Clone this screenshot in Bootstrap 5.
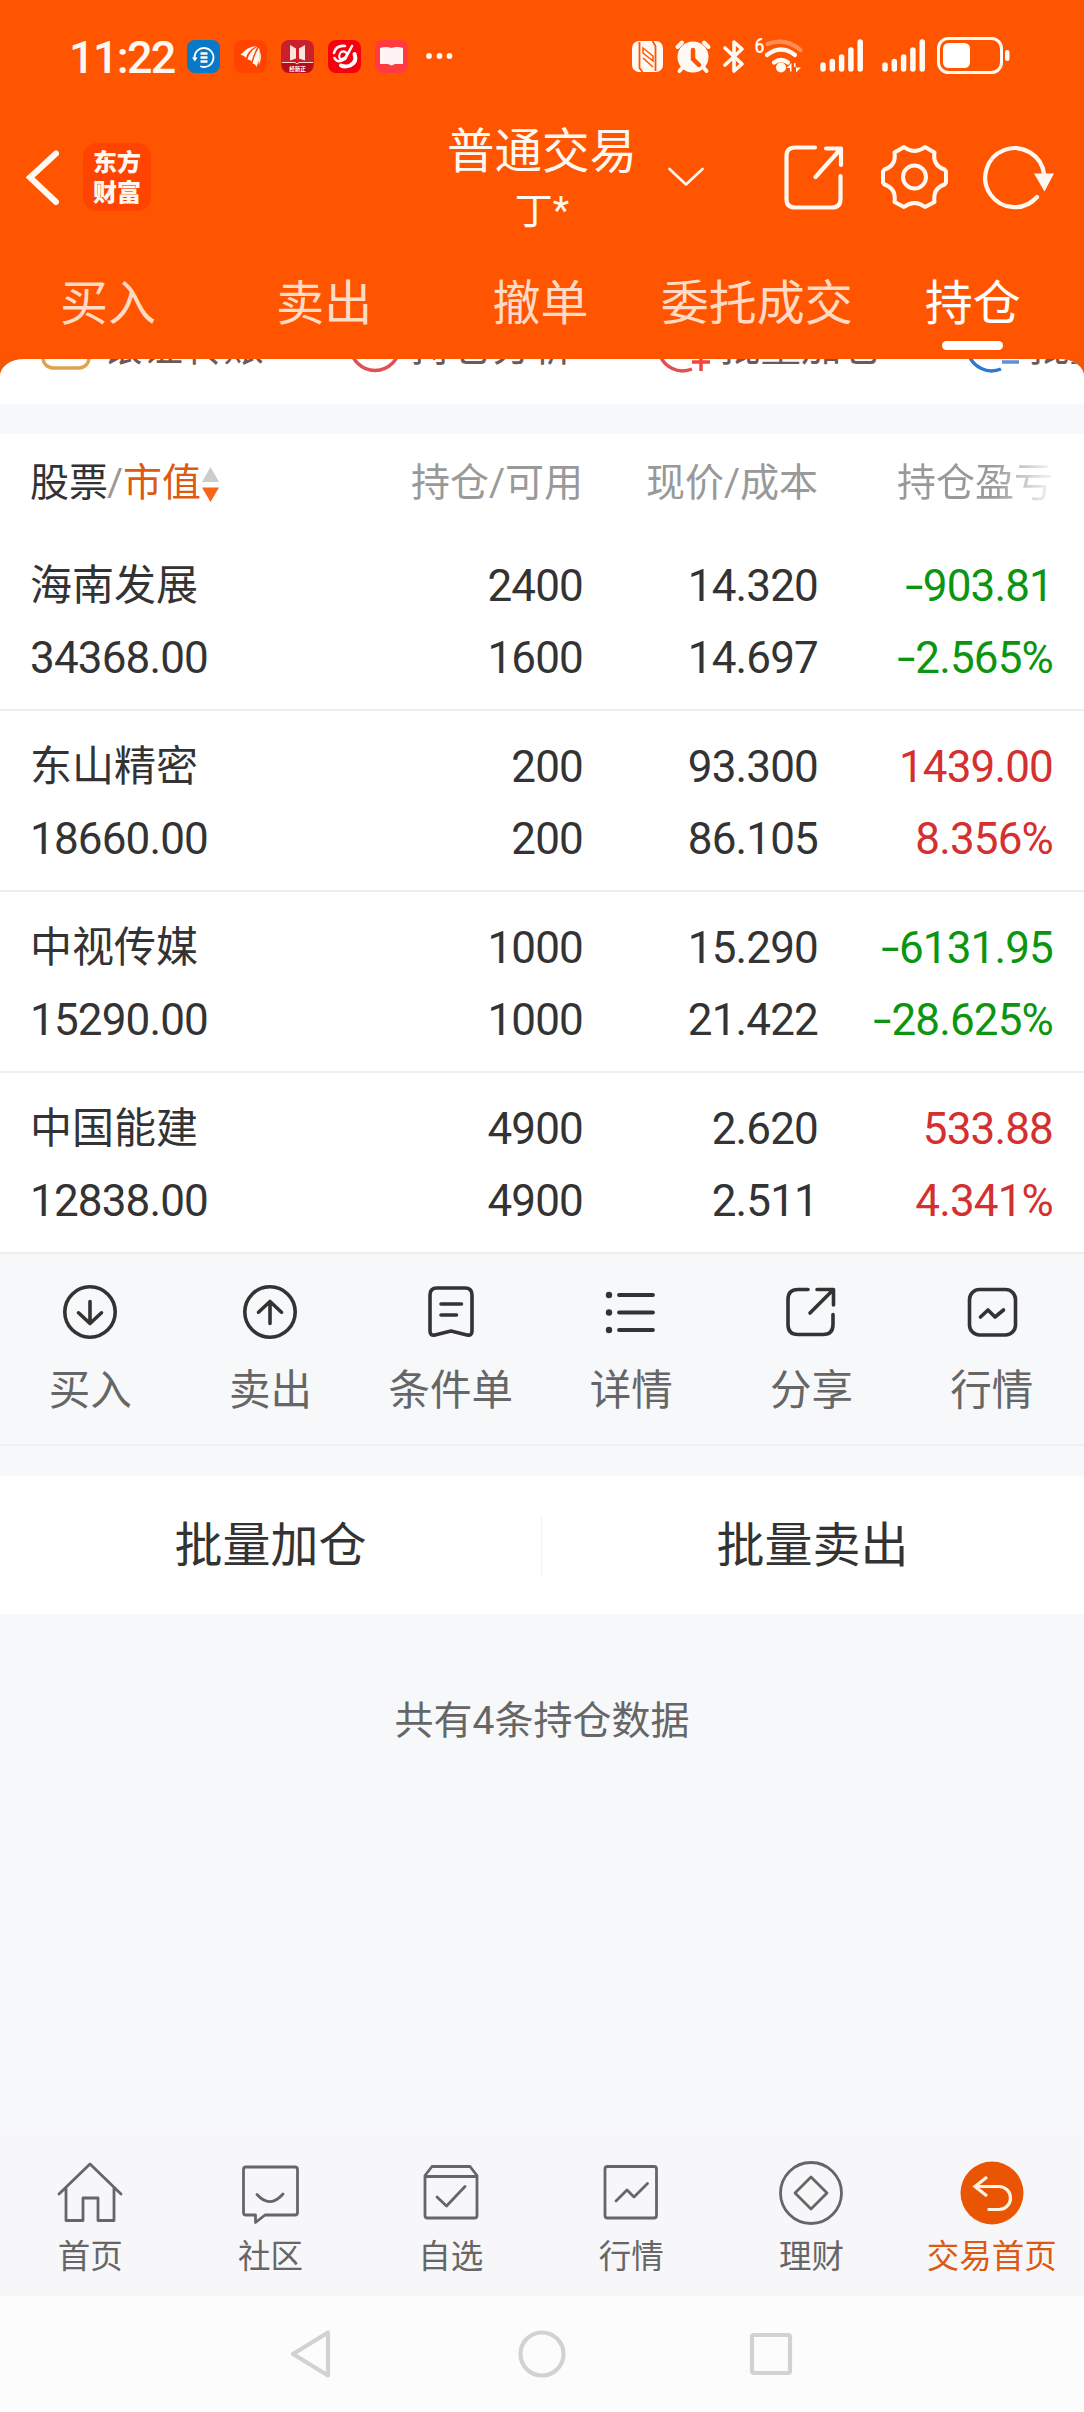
<!DOCTYPE html>
<html lang="zh-CN">
<head>
<meta charset="utf-8">
<meta name="viewport" content="width=device-width, initial-scale=1">
<title>持仓</title>
<link href="https://cdn.jsdelivr.net/npm/bootstrap@5.3.0/dist/css/bootstrap.min.css" rel="stylesheet">
<script src="https://cdn.jsdelivr.net/npm/bootstrap@5.3.0/dist/js/bootstrap.bundle.min.js"></script>
<style>
body{font-family:Roboto,"Noto Sans CJK SC",sans-serif;background:#f7f8fa;color:#333;width:1084px;height:2412px;overflow:hidden}
svg{display:block;flex:none}
.ln{fill:none;stroke:currentColor;stroke-linecap:round;stroke-linejoin:round}
.top-area{background:#f50;height:359px;color:#fff8f0}
.status-bar{height:112px;padding:0 74px 0 69px}
.clock-text{font-size:45px;font-weight:500;line-height:48px;letter-spacing:-1.7px;width:118px;margin-top:34px}
.title-bar{height:128px}
.bar-left{width:442px;padding:31px 0 0 26px}
.app-logo{width:68px;height:68px;margin:0 0 0 24px;border-radius:14px;background:#ff4300;font-family:"Noto Sans CJK SC",sans-serif;font-weight:900;font-size:24px;line-height:30px;padding-top:3px;text-align:center;color:#fff8f0}
.acct{width:200px;text-align:center;padding-top:8px}
.acct-name{font-size:47.5px;line-height:64px}
.acct-user{font-size:38px;line-height:50px;margin-top:2px}
.tabs-row{height:119px;padding-right:3px}
.tabs-row .tab-link{width:20%;text-align:center;font-size:48px;line-height:64px;padding-top:32px;color:#ffdac5;white-space:nowrap}
.tabs-row .tab-link.active{color:#fff}
.tab-link.active::after{content:"";display:block;width:61px;height:9px;border-radius:5px;background:#fff;margin:5px auto 0}
.notch{background:#ed5a0c;height:45px}
.notch-in{background:#fff;height:45px;border-radius:24px 24px 0 0/17px 17px 0 0;overflow:hidden}
.quick-row{margin-top:-42px;width:1236px;height:60px}
.quick-item{width:309px;font-size:40.5px;line-height:60px;color:#6b5a55;padding-left:38px}
.quick-item svg{margin-right:8px}
.gap-band{height:30px}
.grid4{display:grid;grid-template-columns:313px 240px 235px 235px;padding:0 31px 0 30px}
.grid4>:nth-child(n+2){text-align:right}
.head-row{height:96px;font-size:39px;line-height:99px;color:#999;background:#fff}
.title-key{color:#333}
.sl{margin:0 0 0 -1px}
.sort-mark{margin:2px 0 0 1px}
.fade-text{background:linear-gradient(90deg,#999 0 97px,#eee 150px);-webkit-background-clip:text;background-clip:text;color:transparent;display:inline-block}
.hold-row{height:181px;background:#fff;border-bottom:2px solid #eee;font-size:44px;line-height:72px;padding-top:20px;letter-spacing:-.85px}
.stock-name{font-size:42px;letter-spacing:0}
.neg-sign{display:inline-block;transform:scaleX(1.5);margin-right:4px}
.val-up{color:#d3302f}.val-down{color:#0c9510}.brand-txt{color:#dc5a11}
.tool-row{height:192px;border-bottom:2px solid #eef0f1;font-size:41.5px;color:#666;padding-right:2px}
.tool-row>div{width:16.6667%;line-height:60px;padding-top:28px}
.tool-row svg{color:#333;margin-bottom:19px}
.batch-row{height:138px;margin-top:30px;background:#fff;font-size:48px;line-height:138px;text-align:center;padding-right:1px}
.batch-row .sep{width:1px;height:61px;background:#f2f3f5}
.batch-row .batch-btn{padding-top:2px}
.count-text{font-size:39px;line-height:60px;color:#666;margin-top:77px}
.bottom-tabs{height:160px;background:#f7f7fa;font-size:32.5px;color:#666;padding-right:2px}
.bottom-tabs>div{width:16.6667%;line-height:44px;padding-top:24px;white-space:nowrap}
.bottom-tabs svg{margin-bottom:9px}
.bottom-tabs .current{color:#dc5a14}
.sys-bar{height:116px;background:#fcfcfc;color:#d2d2d2}
</style>
</head>
<body class="d-flex flex-column">
<header class="top-area">
  <div class="status-bar d-flex align-items-start">
    <div class="clock-text">11:22</div>
    <svg width="268" height="40" viewBox="187 36 268 40" style="margin-top:36px">
      <rect x="187" y="40" width="33" height="33" rx="8" fill="#0878c8"/>
      <g class="ln" stroke="#fff" stroke-width="1.800"><path d="M194.500 58a9.500 9.500 0 1 1 6.500 8.500" style="stroke:#fff"/><path d="M200.500 53.500h7M200.500 57.500h7M200.500 61.500h7" style="stroke:#fff" stroke-width="2.600" stroke-linecap="butt"/></g>
      <path d="M192 57.500h5.500l-2.700 4z" fill="#fff"/>
      <rect x="234" y="40" width="33" height="33" rx="8" fill="#ff4300"/>
      <g fill="#fff8f0"><path d="M240.500 55q6-8 16-9-9 5-10.500 12-2-3-5.500-3z"/><path d="M247.500 59.500q1.500-8 10-13-4 8-6 15-1-2-4-2z"/><path d="M252.500 63.500q2-9 6.500-16 2.500 9-2.500 19.500-1-3-4-3.500z"/><path d="M260 52q2.500 6-1.500 13z"/></g>
      <rect x="281" y="40" width="33" height="33" rx="8" fill="#c9202b"/><path d="M282 62h31v4q-1 7-8 7h-15q-7 0-8-7z" fill="#b80d19"/>
      <path d="M290 45l6 3.500v10l-6 2zM305 45l-6 3.500v10l6 2z" fill="#ffe5dc"/><path d="M282 62.500h13l2 1.500 2-1.500h14" fill="none" stroke="#ffd9d0"/>
      <text x="297.500" y="70.500" font-size="5.500" font-weight="700" text-anchor="middle" fill="#fff">经新正</text>
      <rect x="328" y="40" width="33" height="33" rx="8" fill="#f5000e"/>
      <g fill="none" stroke="#fff" stroke-linecap="round"><path d="M334 53q2-8 11-7M334.500 58q3 6 10.500 1l7-13" stroke-width="2.600"/><path d="M341 52q-3 4-1 7 5 0 7-5-2-4-6-2z" stroke-width="2"/><path d="M354.500 54q3 8-4.500 11.500-5 2-9 0" stroke-width="4"/></g>
      <rect x="375" y="40" width="33" height="33" rx="8" fill="#ff3b42"/>
      <path d="M380 48q6-2 11.500 0 5.500-2 11.500 0v16h-8l-3.500 1.500L388 64h-8z" fill="#fff4f3"/>
      <g fill="#fff8f0"><circle cx="429" cy="56" r="2.900"/><circle cx="439.500" cy="56" r="2.900"/><circle cx="449.500" cy="56" r="2.900"/></g>
    </svg>
    <svg class="ms-auto" width="378" height="44" viewBox="632 34 378 44" style="margin-top:34px">
      <rect x="632" y="41" width="31" height="31" rx="7" fill="#fffaf4"/>
      <g stroke="#f50" fill="none"><path d="M639.500 42v26l3 4M655.500 71V46l-3-5" stroke-width="1.800"/><path d="M643 48l10 8v5l-10-8zM643 58l10 9" stroke-width="1.500"/></g>
      <circle cx="693" cy="57" r="15.500" fill="#fffaf4"/><g fill="none" stroke="#fffaf4" stroke-width="4" stroke-linecap="round"><path d="M677.500 47l4.500-4.500M708.500 47l-4.500-4.500M683 67l-3.500 4M703 67l3.500 4"/></g><path d="M693 50v9l6 6" fill="none" stroke="#f50" stroke-width="4.500" stroke-linecap="round"/>
      <path d="M725 48l17 16-8 7V42l8 7-17 16" fill="none" stroke="#fffaf4" stroke-width="3.600" stroke-linecap="round" stroke-linejoin="round"/>
      <text x="754.500" y="53" font-size="21" font-weight="500" textLength="10" lengthAdjust="spacingAndGlyphs" fill="#fffaf4">6</text>
      <g fill="none" stroke="#fffaf4" stroke-width="4.200" stroke-linecap="round"><path d="M767.500 44q18-7 33 6" opacity=".35"/><path d="M767 55q14-11 28 0M774 62.500q7-5 14 0"/></g><circle cx="781" cy="67.500" r="5" fill="#fffaf4"/><path d="M786.500 68l5-5v8.500h-1.500v-3.500zM794 63h1.500v4.500h5.500l-5 5V67H794z" fill="#fffaf4"/>
      <g fill="none" stroke="#fffaf4" stroke-width="5.500" stroke-linecap="round"><path d="M823 65V69M832.300 61.500v7.500M841.600 57v12M850.900 50v19M860.200 42v27"/><path d="M885 65V69M894.300 61.500v7.500M903.600 57v12M912.900 50v19M922.200 42v27"/></g>
      <rect x="938.500" y="38.500" width="63" height="34" rx="10" fill="none" stroke="#fffaf4" stroke-width="3"/><rect x="943" y="43" width="27" height="25" rx="5.500" fill="#fff"/><rect x="1005" y="50" width="4.500" height="11" rx="2" fill="#fffaf4"/>
    </svg>
  </div>
  <div class="title-bar d-flex align-items-start">
    <div class="bar-left d-flex align-items-center">
      <svg width="33" height="56" viewBox="26 149 33 56"><path d="M56 153.500L30 177.500l26 24.500" fill="none" stroke="#fffaf4" stroke-width="6" stroke-linecap="round"/></svg>
      <div class="app-logo">东方<br>财富</div>
    </div>
    <div class="acct"><div class="acct-name">普通交易</div><div class="acct-user">丁*</div></div>
    <svg width="38" height="21" viewBox="667 166 38 21" style="margin:54px 0 0 25px"><path class="ln" d="M669.500 169L686 184.500 702.500 169" stroke-width="2.600"/></svg>
    <div class="ms-auto d-flex" style="margin:30px 28px 0 0">
      <svg width="64" height="70" viewBox="782 142 64 70"><g class="ln" stroke-width="4.200"><path d="M815 147.500h-20q-8.500 0-8.500 8.500v43q0 8.500 8.500 8.500h37q8.500 0 8.500-8.500V176"/><path d="M826 148.500h15V165M841 148.500L815.500 177"/></g></svg>
      <svg width="70" height="70" viewBox="880 142 70 70" style="margin-left:34px"><g class="ln" stroke-width="4"><path d="M904 147q10.500 8 21 0l9.500 5.500q-2 13 10 17l1.500 2v11l-1.500 2q-12 4-10 17.500L925 207q-10.500-8-21 0l-9.500-5q2-13.500-10-17.500l-1.500-2v-11l1.500-2q12-4 10-17z"/><circle cx="914.500" cy="177" r="11.500"/></g></svg>
      <svg width="74" height="70" viewBox="982 142 74 70" style="margin-left:32px"><path class="ln" d="M1044 174A29.500 29.500 0 1 0 1037 197" stroke-width="4.200"/><path d="M1034 173.500h20l-9.500 18z" fill="currentColor"/></svg>
    </div>
  </div>
  <nav class="tabs-row d-flex">
    <div class="tab-link">买入</div><div class="tab-link">卖出</div><div class="tab-link">撤单</div><div class="tab-link">委托成交</div><div class="tab-link active">持仓</div>
  </nav>
</header>
<main class="flex-grow-1">
  <div class="notch"><div class="notch-in"><div class="quick-row d-flex">
    <div class="quick-item d-flex align-items-center"><svg width="56" height="56" viewBox="0 0 56 56"><rect x="5" y="8" width="46" height="41" rx="10" fill="none" stroke="#e0a24c" stroke-width="3.500"/></svg>银证转账</div>
    <div class="quick-item d-flex align-items-center"><svg width="56" height="56" viewBox="0 0 56 56"><circle cx="28" cy="27" r="24.500" fill="none" stroke="#e05252" stroke-width="3.500"/></svg>持仓分析</div>
    <div class="quick-item d-flex align-items-center"><svg width="56" height="56" viewBox="0 0 56 56"><path d="M36 50A24.500 24.500 0 1 1 51 24" fill="none" stroke="#e05252" stroke-width="3.500"/><path d="M36 43h18M45 34v18" stroke="#f0443c" stroke-width="3.500"/></svg>批量加仓</div>
    <div class="quick-item d-flex align-items-center"><svg width="56" height="56" viewBox="0 0 56 56"><path d="M36 50A24.500 24.500 0 1 1 51 24" fill="none" stroke="#2f7ad0" stroke-width="3.500"/><path d="M37 43h17" stroke="#5a92dc" stroke-width="3.500"/></svg>批量卖出</div>
  </div></div></div>
  <div class="gap-band"></div>
  <section>
    <div class="grid4 head-row">
      <div class="d-flex align-items-center"><span class="title-key">股票</span><span class="sl">/</span><span class="brand-txt">市值</span>
        <svg class="sort-mark" width="17" height="36" viewBox="0 0 17 36"><path d="M8.500 0l8.500 15H0z" fill="#ccc"/><path d="M8.500 35L0 20.500h17z" fill="#f4651c"/></svg></div>
      <div>持仓/可用</div><div>现价/成本</div><div><span class="fade-text">持仓盈亏</span></div>
    </div>
    <div class="grid4 hold-row"><div><div class="stock-name">海南发展</div><div>34368.00</div></div><div>2400<br>1600</div><div>14.320<br>14.697</div><div class="val-down"><span class="neg-sign">-</span>903.81<br><span class="neg-sign">-</span>2.565%</div></div>
    <div class="grid4 hold-row"><div><div class="stock-name">东山精密</div><div>18660.00</div></div><div>200<br>200</div><div>93.300<br>86.105</div><div class="val-up">1439.00<br>8.356%</div></div>
    <div class="grid4 hold-row"><div><div class="stock-name">中视传媒</div><div>15290.00</div></div><div>1000<br>1000</div><div>15.290<br>21.422</div><div class="val-down"><span class="neg-sign">-</span>6131.95<br><span class="neg-sign">-</span>28.625%</div></div>
    <div class="grid4 hold-row"><div><div class="stock-name">中国能建</div><div>12838.00</div></div><div>4900<br>4900</div><div>2.620<br>2.511</div><div class="val-up">533.88<br>4.341%</div></div>
  </section>
  <div class="tool-row d-flex">
    <div class="d-flex flex-column align-items-center"><svg width="60" height="60" viewBox="-30 -30 60 60"><g class="ln" stroke-width="3.600"><circle r="25.200"/><path d="M0-10.500V11.500M-11.500.800L0 11.500 11.500.800"/></g></svg>买入</div>
    <div class="d-flex flex-column align-items-center"><svg width="60" height="60" viewBox="-30 -30 60 60"><g class="ln" stroke-width="3.600"><circle r="25.200"/><path d="M0 11.500V-10.500M-11.500.200L0-10.500 11.500.200"/></g></svg>卖出</div>
    <div class="d-flex flex-column align-items-center"><svg width="60" height="60" viewBox="-30 -30 60 60"><g class="ln" stroke-width="3.600"><path d="M-14-24h28q7 0 7 7v36q0 5-5 4L0 19l-16 4q-5 1-5-4v-36q0-7 7-7z"/><path d="M-10-8H10.500M-10 3H5.500"/></g></svg>条件单</div>
    <div class="d-flex flex-column align-items-center"><svg width="60" height="60" viewBox="-30 -30 60 60"><path class="ln" d="M-12-17H22M-12 .500H22M-12 18H22" stroke-width="3.800"/><g fill="currentColor"><circle cx="-22" cy="-17" r="3.200"/><circle cx="-22" cy=".500" r="3.200"/><circle cx="-22" cy="18" r="3.200"/></g></svg>详情</div>
    <div class="d-flex flex-column align-items-center"><svg width="60" height="60" viewBox="-30 -30 60 60"><g class="ln" stroke-width="3.600"><path d="M-3-22.500h-10q-10 0-10 10v25q0 10 10 10h25q10 0 10-10V2.500"/><path d="M6-22.500H22.500V-7M22-22L-1 1"/></g></svg>分享</div>
    <div class="d-flex flex-column align-items-center"><svg width="60" height="60" viewBox="-30 -30 60 60"><g class="ln" stroke-width="3.600"><rect x="-22.500" y="-22.500" width="46" height="45.500" rx="10"/><path d="M-11.500 5l7.500-7L3 5l8.500-7"/></g></svg>行情</div>
  </div>
  <div class="batch-row d-flex align-items-center"><div class="batch-btn flex-fill w-50">批量加仓</div><div class="sep"></div><div class="batch-btn flex-fill w-50">批量卖出</div></div>
  <div class="count-text text-center">共有4条持仓数据</div>
</main>
<nav class="bottom-tabs d-flex flex-shrink-0">
  <div class="d-flex flex-column align-items-center"><svg width="66" height="66" viewBox="-33 -33 66 66"><path class="ln" stroke-width="2.800" d="M-31 1L0-29 31 1M-24-5V27.500H-7V5H8V27.500H24V-5"/></svg>首页</div>
  <div class="d-flex flex-column align-items-center"><svg width="66" height="66" viewBox="-33 -33 66 66"><path class="ln" stroke-width="2.800" d="M-24-26H25q2.500 0 2.500 2.500V19.500q0 2.500-2.500 2.500H-5l-9.500 7.500V22H-24q-2.500 0-2.500-2.500V-23.500Q-26.500-26-24-26zM-13 1.500Q0 16 13 1"/></svg>社区</div>
  <div class="d-flex flex-column align-items-center"><svg width="66" height="66" viewBox="-33 -33 66 66"><path class="ln" stroke-width="2.800" d="M-26-17.500l7-9H19l7 9V22.500q0 2.500-2.500 2.500H-23.500q-2.500 0-2.500-2.500zM-26-16.500H26M-14 4L-4.500 13 14-6.500"/></svg>自选</div>
  <div class="d-flex flex-column align-items-center"><svg width="66" height="66" viewBox="-33 -33 66 66"><g class="ln" stroke-width="2.800"><rect x="-26" y="-26.500" width="51.500" height="51.500" rx="2.500"/><path d="M-15 8L-4-3 3 4 16.500-9.500"/></g></svg>行情</div>
  <div class="d-flex flex-column align-items-center"><svg width="66" height="66" viewBox="-33 -33 66 66"><g class="ln" stroke-width="2.800"><circle r="30.500"/><path d="M0-16L16 0 0 16-16 0z"/></g></svg>理财</div>
  <div class="current d-flex flex-column align-items-center"><svg width="66" height="66" viewBox="-33 -33 66 66"><circle r="31.500" fill="#ea5504"/><path d="M-5-16L-17-6.500-5 3M-17-6.500H7A11.500 11.500 0 0 1 7 16.500H-4.500" fill="none" stroke="#fff3e4" stroke-width="3.200"/></svg>交易首页</div>
</nav>
<footer class="sys-bar flex-shrink-0 d-flex align-items-center justify-content-center">
  <svg width="50" height="50" viewBox="-23 -25 50 50"><path class="ln" d="M17-21.500V21.500L-18 0z" stroke-width="4.200"/></svg>
  <svg width="50" height="50" viewBox="-25 -25 50 50" style="margin:0 179px"><circle class="ln" r="21.500" stroke-width="4.200"/></svg>
  <svg width="50" height="50" viewBox="-25 -25 50 50"><rect class="ln" x="-19" y="-19" width="38" height="38" rx="2" stroke-width="4.200"/></svg>
</footer>
</body>
</html>
